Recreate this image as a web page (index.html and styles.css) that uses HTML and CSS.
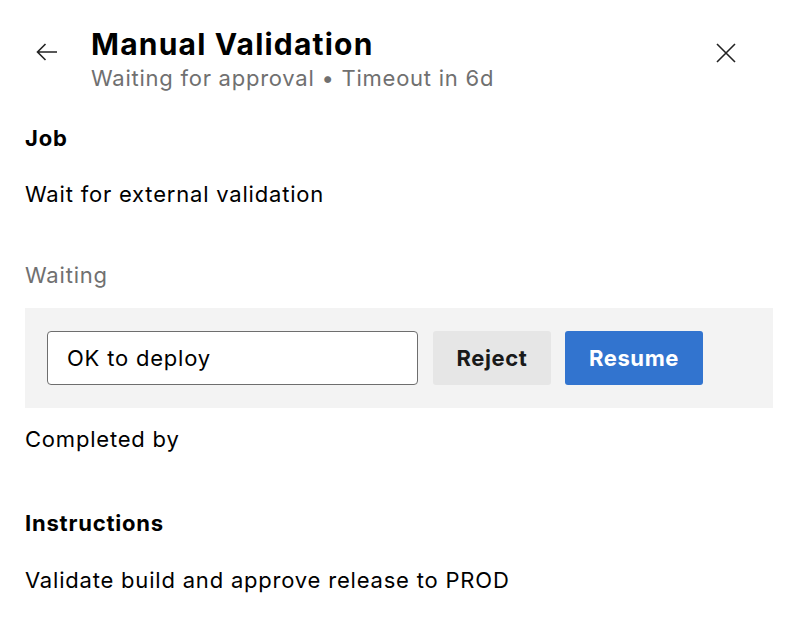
FILE: index.html
```html
<!DOCTYPE html>
<html lang="en">
<head>
<meta charset="utf-8">
<title>Manual Validation</title>
<link rel="stylesheet" href="styles.css">
</head>
<body>
<div class="panel">
  <header class="header">
    <button class="icon-btn back" aria-label="Back">
      <svg width="22" height="18" viewBox="0 0 22 18"><path d="M21 9H1.5M9.5 1L1.5 9l8 8" fill="none" stroke="#222" stroke-width="1.6"/></svg>
    </button>
    <div class="titles">
      <h1 class="title">Manual Validation</h1>
      <div class="subtitle">Waiting for approval • Timeout in 6d</div>
    </div>
    <button class="icon-btn close" aria-label="Close">
      <svg width="20" height="20" viewBox="0 0 20 20"><path d="M1 1L19 19M19 1L1 19" fill="none" stroke="#222" stroke-width="1.6"/></svg>
    </button>
  </header>
  <main class="content">
    <h2 class="label">Job</h2>
    <p class="text job">Wait for external validation</p>
    <p class="text muted">Waiting</p>
    <div class="action-box">
      <input class="comment" type="text" value="OK to deploy">
      <button class="btn reject">Reject</button>
      <button class="btn resume">Resume</button>
    </div>
    <p class="text completed">Completed by</p>
    <h2 class="label instructions">Instructions</h2>
    <p class="text">Validate build and approve release to PROD</p>
  </main>
</div>
</body>
</html>
```
FILE: styles.css
```css
* { box-sizing: border-box; }
body {
  margin: 0;
  background: #fff;
  color: #000;
  font-family: Inter, "Noto Sans", sans-serif;
}
.panel { width: 794px; }
.header {
  display: flex;
  align-items: flex-start;
  padding: 24px 58px 0 36px;
}
.icon-btn {
  border: 0;
  background: none;
  padding: 0;
  display: flex;
}
.back { margin-top: 19px; margin-right: 33px; }
.close { margin-top: 19px; margin-left: auto; }
.title {
  margin: 0;
  font-size: 30px;
  line-height: 40px;
  font-weight: 700;
  letter-spacing: 1.2px;
}
.subtitle {
  font-size: 22px;
  line-height: 28px;
  letter-spacing: 0.75px;
  color: #707070;
}
.content { padding: 0 21px 0 25px; }
.label {
  margin: 32px 0 0;
  font-size: 22px;
  font-weight: 700;
  line-height: 28px;
  letter-spacing: 0.8px;
}
.text {
  margin: 0;
  font-size: 22px;
  line-height: 28px;
  letter-spacing: 0.8px;
}
.job { margin-top: 28px; }
.muted { color: #707070; margin-top: 53px; }
.action-box {
  margin-top: 19px;
  background: #f3f3f3;
  height: 100px;
  display: flex;
  align-items: center;
  padding: 0 22px;
  gap: 14px;
}
.comment {
  width: 371px;
  height: 54px;
  border: 1.5px solid #6e6e6e;
  border-radius: 4px;
  padding: 0 19px;
  font: inherit;
  font-size: 22px;
  letter-spacing: 0.8px;
  color: #000;
  background: #fff;
  margin-right: 1px;
}
.btn {
  height: 54px;
  border: 0;
  border-radius: 3px;
  font: inherit;
  font-size: 22px;
  font-weight: 700;
  letter-spacing: 0.6px;
  padding: 0;
}
.reject { background: #e6e6e6; color: #1a1a1a; width: 118px; }
.resume { background: #3274cf; color: #fff; width: 138px; }
.completed { margin-top: 17px; }
.instructions { margin-top: 56px; }
.instructions + .text { margin-top: 29px; }
```
